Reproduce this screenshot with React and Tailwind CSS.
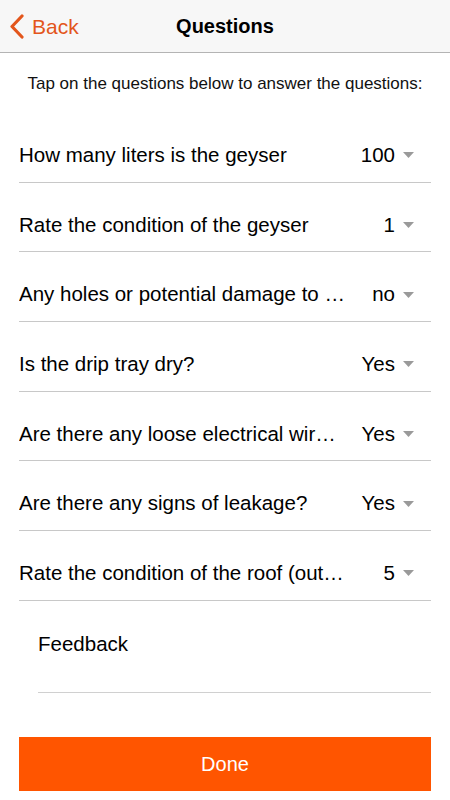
import React from 'react';

const questions = [
  { q: 'How many liters is the geyser', a: '100' },
  { q: 'Rate the condition of the geyser', a: '1' },
  { q: 'Any holes or potential damage to the geyser?', a: 'no' },
  { q: 'Is the drip tray dry?', a: 'Yes' },
  { q: 'Are there any loose electrical wires?', a: 'Yes' },
  { q: 'Are there any signs of leakage?', a: 'Yes' },
  { q: 'Rate the condition of the roof (outside)', a: '5' },
];

const Caret = () => (
  <svg width="11" height="6" viewBox="0 0 11 6" className="shrink-0">
    <path d="M0 0 L11 0 L5.5 6 Z" fill="#9a9a9a" />
  </svg>
);

const App = () => {
  return (
    <div className="w-[450px] h-[800px] bg-white flex flex-col font-['Liberation_Sans',Arial,sans-serif] text-black">
      {/* header */}
      <div className="h-[53px] shrink-0 bg-[#f7f7f7] border-b border-[#b4b4b4] flex items-center relative">
        <div className="flex items-center pl-[9px] gap-[8px] text-[#e3561c]">
          <svg width="15" height="25" viewBox="0 0 15 25">
            <path d="M13 2 L3 12.5 L13 23" fill="none" stroke="#e3561c" strokeWidth="3.2" strokeLinecap="round" strokeLinejoin="round" />
          </svg>
          <span className="text-[21px] leading-none">Back</span>
        </div>
        <div className="absolute inset-x-0 top-0 h-[52px] flex items-center justify-center pointer-events-none">
          <span className="text-[20px] font-bold">Questions</span>
        </div>
      </div>

      <div className="h-[60px] flex items-center justify-center pt-[1px] text-[17px] text-[#111]">
        Tap on the questions below to answer the questions:
      </div>

      <div className="px-[19px] flex flex-col">
        {questions.map((item, i) => (
          <div key={i} className="h-[69.7px] border-b border-[#c8c8c8] flex items-center pt-[16px]">
            <span className="w-[326px] shrink-0 truncate text-[20.5px]">{item.q}</span>
            <span className="flex-1 text-[20.5px] text-right">{item.a}</span>
            <span className="ml-[8px] mr-[17px] flex items-center"><Caret /></span>
          </div>
        ))}
      </div>

      <div className="pl-[38px] pr-[19px]">
        <div className="h-[92px] border-b border-[#d0d0d0] pt-[28px] text-[20.5px]">Feedback</div>
      </div>

      <div className="px-[19px] pt-[44px]">
        <button className="w-full h-[54px] bg-[#ff5500] text-white text-[20px] flex items-center justify-center">
          Done
        </button>
      </div>
    </div>
  );
};

export default App;
